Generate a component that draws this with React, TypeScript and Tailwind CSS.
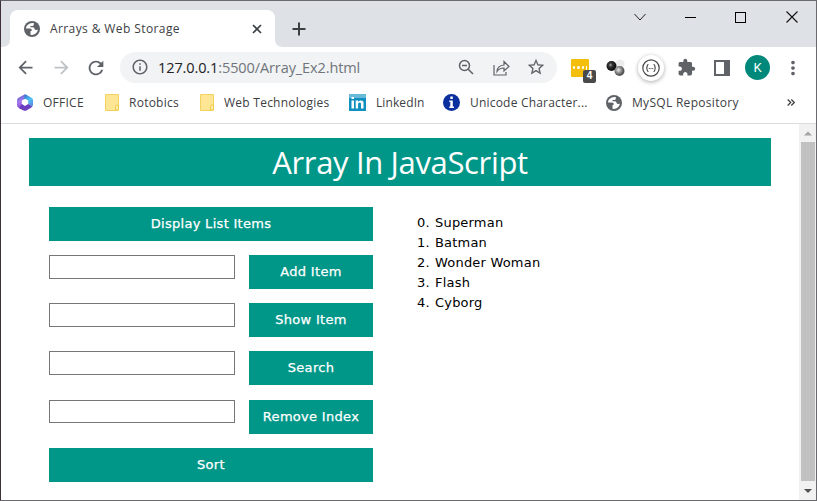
import type { ReactNode } from "react";
import {
  MdArrowBack,
  MdArrowForward,
  MdExtension,
  MdInfoOutline,
  MdMoreVert,
  MdRefresh,
  MdStarBorder,
} from "react-icons/md";

function FolderIcon() {
  return (
    <svg width="14" height="17" viewBox="0 0 14 17">
      <path d="M.5.5h13v15a1 1 0 0 1-1 1H.5z" fill="#ffe694" stroke="#f2d25c" />
      <path d="M13.5 10.5v5.500h-3v-3.500q0-2 2.500-1.500" fill="#ffeaa5" stroke="#eecb4b" />
    </svg>
  );
}

function OfficeIcon() {
  return (
    <svg width="16" height="17" viewBox="0 0 16 17">
      <defs>
        <linearGradient id="office-left" x1="0" y1="0" x2="0.3" y2="1">
          <stop offset="0" stopColor="#3f5fd0" />
          <stop offset="0.5" stopColor="#a678ea" />
          <stop offset="1" stopColor="#8a4fd6" />
        </linearGradient>
        <linearGradient id="office-right" x1="0" y1="0" x2="0.6" y2="1">
          <stop offset="0" stopColor="#2f62c4" />
          <stop offset="0.6" stopColor="#4fc3f2" />
          <stop offset="1" stopColor="#5b8fe8" />
        </linearGradient>
      </defs>
      <path d="M8 .3 1.500 3.800Q0 4.700 0 6.300v5Q0 13 1.500 13.800L4 15.200 5.500 11 4.800 10V6.500L9.500 4z" fill="url(#office-left)" />
      <path d="M8 .3 9.300.7l5.200 3Q16 4.600 16 6.200v4.600q0 1.200-.8 1.900L11.200 10V6.500L8 4.800 6.500 5.500z" fill="url(#office-right)" />
      <path d="M4.800 10 8 12l3.200-2 4 2.600q-.3.600-.8.900l-5 2.900q-1.400.7-2.800 0L4 15.200l-2-1.300z" fill="#6a3fc0" />
    </svg>
  );
}

function LinkedInIcon() {
  return (
    <svg width="17" height="17" viewBox="0 0 17 17">
      <rect width="17" height="17" fill="#0f8fbf" />
      <rect width="17" height="4" fill="#69bad9" />
      <g fill="#fff">
        <rect x="2.500" y="3" width="2.500" height="2" />
        <rect x="2.500" y="6.500" width="2.500" height="8" />
        <path d="M6.700 6.500h2.400v1.200q2.800-2.600 5.400 0V14.500H12V9.500q-1.300-2-2.900 0v5H6.700z" />
      </g>
    </svg>
  );
}

function InfoBadgeIcon() {
  return (
    <svg width="17" height="17" viewBox="0 0 17 17">
      <circle cx="8.500" cy="8.500" r="8.500" fill="#0b2f9e" />
      <path d="M7.300 2.500h2.500v2.500H7.300zM6.300 6.500h3.500v6h1.200v1.500H6.300v-1.500h1v-4.500h-1z" fill="#fff" />
    </svg>
  );
}

function GlobeIcon() {
  return (
    <svg width="16" height="16" viewBox="0 0 16 16" className="shrink-0">
      <circle cx="8" cy="8" r="8" fill="#5f6368" />
      <path
        d="M9.800 2.100Q5.500 1.200 3 4.600 1.900 6.300 2 7.500h3.200q2.300 0 2.600 1.200.3 1.300-1.300 1.500v3.600q3 .6 5.200-1.200 1.900-1.600 2.200-4-1 .7-2.300.3-1.200-.4-1.200-1.700-.4-1-1.700-1H6.400V5h1.800q1.600 0 1.600-1.500z"
        fill="#fff"
      />
    </svg>
  );
}

function Bookmark({ icon, label, className }: { icon: ReactNode; label: string; className: string }) {
  return (
    <div className={`flex h-[17px] shrink-0 items-center gap-2.5 ${className}`}>
      {icon}
      <span className="whitespace-nowrap">{label}</span>
    </div>
  );
}

function TabStrip() {
  return (
    <div className="flex h-[46px] items-end bg-[#dee1e6] pl-px">
      <svg width="8" height="8" viewBox="0 0 8 8" className="shrink-0">
        <path d="M8 0v8H0q8 0 8-8" fill="#fff" />
      </svg>
      <div className="flex h-[37px] w-[265px] items-center rounded-t-lg bg-white pl-[14px]">
        <GlobeIcon />
        <span className="ml-[10px] w-[196px] whitespace-nowrap text-[12px] tracking-[0.4px] text-[#3c4043]">
          Arrays &amp; Web Storage
        </span>
        <svg width="10" height="10" viewBox="0 0 10 10" className="ml-1.5" stroke="#3c4043" strokeWidth="1.700">
          <path d="m1 1 8 8M9 1 1 9" />
        </svg>
      </div>
      <svg width="8" height="8" viewBox="0 0 8 8" className="shrink-0">
        <path d="M0 0v8h8Q0 8 0 0" fill="#fff" />
      </svg>
      <svg width="14" height="14" viewBox="0 0 14 14" className="mb-[11px] ml-[9px]" stroke="#3c4043" strokeWidth="2">
        <path d="M7 .5v13M.5 7h13" />
      </svg>
      <div className="ml-auto flex items-center self-start pt-2.5 pr-[18px]">
        <svg width="12" height="8" viewBox="0 0 12 8" fill="none" stroke="#222" className="mr-[39px]">
          <path d="m.5 1 5.500 6 5.500-6" />
        </svg>
        <span className="mr-[39px] h-px w-[11px] bg-black" />
        <span className="mr-[40px] size-[11px] border border-black" />
        <svg width="12" height="12" viewBox="0 0 12 12" stroke="#111" strokeWidth="1.100">
          <path d="m.5.5 11 11M11.500.5l-11 11" />
        </svg>
      </div>
    </div>
  );
}

function Toolbar() {
  return (
    <div className="flex h-[41px] items-center bg-white pl-[14px] text-[#5f6368]">
      <MdArrowBack size={21} className="shrink-0" />
      <MdArrowForward size={21} className="ml-[15px] shrink-0 text-[#bdc1c6]" />
      <MdRefresh size={22} className="ml-[13px] shrink-0" />
      <div className="ml-[13px] flex h-[31px] w-[437px] shrink-0 items-center rounded-full bg-[#f1f3f4] pl-[11px]">
        <MdInfoOutline size={18} className="shrink-0 -translate-y-px" />
        <span className="ml-[9px] w-[298px] whitespace-nowrap text-[14.500px] tracking-[-0.1px] text-[#70757a]">
          <span className="text-[#202124]">127.0.0.1</span>:5500/Array_Ex2.html
        </span>
        <svg width="16" height="16" viewBox="0 0 16 16" fill="none" stroke="currentColor" strokeWidth="1.500" className="ml-[2px] shrink-0 -translate-y-px">
          <circle cx="6.500" cy="6.500" r="5" />
          <path d="m10 10 5 5M4 6.500h5" />
        </svg>
        <svg width="17" height="16" viewBox="0 0 17 16" fill="none" stroke="currentColor" strokeWidth="1.200" className="ml-[19px] shrink-0">
          <path d="M1 5v10h12v-3M4 11.500q.5-6 7-6.500V1.500l5 5-5 4.500V8Q6.500 8 4 11.500z" />
        </svg>
        <MdStarBorder size={20} className="ml-[16px] shrink-0 -translate-y-px" />
      </div>
      <div className="relative ml-[14px] flex h-[18px] w-[18px] shrink-0 items-center justify-center gap-[2px] rounded-[1px] bg-[#f4bf0c]">
        <i className="size-[2.500px] rounded-full bg-white" />
        <i className="size-[2.500px] rounded-full bg-white" />
        <i className="size-[2.500px] rounded-full bg-white" />
        <i className="h-1 w-px bg-white" />
        <span className="absolute -right-[7px] -bottom-[6px] flex h-[13px] w-[13px] items-center justify-center rounded-[2px] bg-[#4a4a4a] font-['Liberation_Sans'] text-[10px] leading-none font-bold text-white">
          4
        </span>
      </div>
      <svg width="20" height="18" viewBox="0 0 20 18" className="ml-[17px] shrink-0">
        <defs>
          <radialGradient id="ball-dark" cx="0.4" cy="0.4">
            <stop offset="0" stopColor="#aaa" />
            <stop offset="0.4" stopColor="#333" />
            <stop offset="1" stopColor="#111" />
          </radialGradient>
          <radialGradient id="ball-gray" cx="0.4" cy="0.4">
            <stop offset="0" stopColor="#eee" />
            <stop offset="0.5" stopColor="#999" />
            <stop offset="1" stopColor="#555" />
          </radialGradient>
        </defs>
        <circle cx="14" cy="5" r="4.500" fill="#ececec" />
        <circle cx="5.500" cy="7" r="5" fill="url(#ball-dark)" />
        <circle cx="13.500" cy="12" r="5" fill="url(#ball-gray)" />
      </svg>
      <div className="ml-[12px] flex size-[26px] shrink-0 items-center justify-center rounded-full bg-white shadow-[0_1px_4px_#0005]">
        <svg width="18" height="18" viewBox="0 0 18 18" fill="none" stroke="#484848" strokeWidth="1.200">
          <circle cx="9" cy="9" r="8.200" />
          <path d="M6.500 5.500q-1.300 0-1.300 1.500 0 2-1 2 1 0 1 2 0 1.500 1.300 1.500M11.500 5.500q1.300 0 1.300 1.500 0 2 1 2-1 0-1 2 0 1.500-1.300 1.500M6.800 9.500h1M8.500 9.500h1M10.200 9.500h1" />
        </svg>
      </div>
      <MdExtension size={19} className="ml-[13px] shrink-0" />
      <svg width="16" height="16" viewBox="0 0 16 16" className="ml-[18px] shrink-0">
        <path d="M1 1h14v14H1z" fill="none" stroke="currentColor" strokeWidth="2" />
        <path d="M10 1h5v14h-5z" fill="currentColor" />
      </svg>
      <div className="ml-[15px] flex size-[25px] shrink-0 items-center justify-center rounded-full bg-[#00897b] font-[Roboto] text-[13px] text-white">
        K
      </div>
      <MdMoreVert size={22} className="ml-[12px] shrink-0" />
    </div>
  );
}

function Bookmarks() {
  return (
    <div className="flex h-[36px] items-center border-b border-[#dadce0] bg-white pb-[6px] pl-4 text-[12px] tracking-[0.25px] text-[#3c4043]">
      <Bookmark icon={<OfficeIcon />} label="OFFICE" className="w-[88px]" />
      <Bookmark icon={<FolderIcon />} label="Rotobics" className="w-[95px]" />
      <Bookmark icon={<FolderIcon />} label="Web Technologies" className="w-[149px]" />
      <Bookmark icon={<LinkedInIcon />} label="LinkedIn" className="w-[94px] tracking-[0.1px]" />
      <Bookmark icon={<InfoBadgeIcon />} label="Unicode Character..." className="w-[163px] tracking-[0.2px]" />
      <Bookmark icon={<GlobeIcon />} label="MySQL Repository" className="w-[181px] tracking-[0.3px]" />
      <svg width="8" height="7" viewBox="0 0 8 7" fill="none" stroke="#444" strokeWidth="1.300">
        <path d="m.7.500 3 3-3 3M4.300.500l3 3-3 3" />
      </svg>
    </div>
  );
}

function Button({ children }: { children: ReactNode }) {
  return (
    <button className="flex h-[34px] w-full items-center justify-center bg-[#009688] text-[13px] tracking-[0.3px] text-white [-webkit-text-stroke:0.25px_white]">
      {children}
    </button>
  );
}

const actions = [
  { label: "Add Item", row: "mb-[14px]", field: "h-[24px]" },
  { label: "Show Item", row: "mb-[14px]", field: "h-[24px]" },
  { label: "Search", row: "mb-[15px]", field: "h-[24px]" },
  { label: "Remove Index", row: "mb-[14px]", field: "h-[23px]" },
];

const heroes = ["Superman", "Batman", "Wonder Woman", "Flash", "Cyborg"];

function Page() {
  return (
    <main className="flex-1 pt-[14px] pr-[28px] pl-[28px]">
      <h1 className="flex h-[48px] items-center justify-center bg-[#009688] pt-px font-['Open_Sans'] text-[31px] tracking-[-0.350px] text-white">
        Array In JavaScript
      </h1>
      <div className="mt-[21px] flex pl-5 font-['DejaVu_Sans',Verdana,sans-serif]">
        <div className="w-[324px]">
          <div className="mb-[14px]">
            <Button>Display List Items</Button>
          </div>
          {actions.map((action) => (
            <div key={action.label} className={`flex items-start gap-[14px] ${action.row}`}>
              <input className={`w-[186px] border border-[#767676] ${action.field}`} />
              <div className="w-[124px]">
                <Button>{action.label}</Button>
              </div>
            </div>
          ))}
          <Button>Sort</Button>
        </div>
        <ol start={0} className="mt-[6px] ml-[44px] text-[13px] leading-5 tracking-[0.2px] text-black">
          {heroes.map((hero, index) => (
            <li key={hero} className="flex">
              <span className="w-[18px]">{index}.</span>
              {hero}
            </li>
          ))}
        </ol>
      </div>
    </main>
  );
}

function Scrollbar() {
  return (
    <div className="flex w-[17px] flex-col items-center bg-[#f1f1f1]">
      <svg width="17" height="18" viewBox="0 0 17 18">
        <path d="M5 11.500 9 7.500l4 4z" fill="#a3a3a3" />
      </svg>
      <div className="ml-px h-[339px] w-[14px] bg-[#c1c1c1]" />
      <svg width="17" height="19" viewBox="0 0 17 19">
        <path d="M5 8l4 4 4-4z" fill="#505050" />
      </svg>
    </div>
  );
}

export default function App() {
  return (
    <div className="flex h-[501px] w-[817px] flex-col overflow-hidden border border-[#6a6a6e] border-l-[#3d3038] bg-white font-['Open_Sans',sans-serif]">
      <TabStrip />
      <Toolbar />
      <Bookmarks />
      <div className="flex min-h-0 flex-1">
        <Page />
        <Scrollbar />
      </div>
    </div>
  );
}
